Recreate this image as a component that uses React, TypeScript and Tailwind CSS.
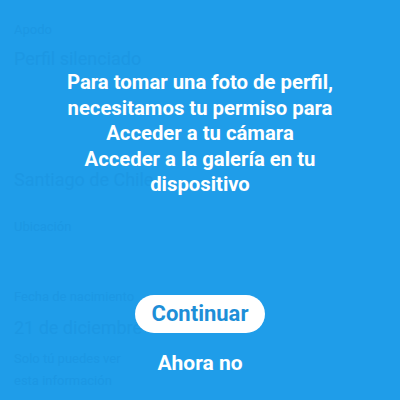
import React from 'react';

const ghost = 'text-[#1c97e3]';

export default function App() {
    return (
        <div
            className="relative w-[400px] h-[400px] overflow-hidden bg-[#1f9de9]"
            style={{ fontFamily: 'Roboto, "Noto Sans", sans-serif' }}
        >
            {/* Faded profile form behind the permission overlay */}
            <div className={`flex flex-col px-[14px] ${ghost}`}>
                <div className="mt-[22px] text-[13px] leading-[16px]">Apodo</div>
                <div className="mt-[10px] text-[18px] leading-[22px]">Perfil silenciado</div>
                <div className="mt-[99px] text-[18px] leading-[22px]">Santiago de Chile</div>
                <div className="mt-[28px] text-[13px] leading-[16px]">Ubicación</div>
                <div className="mt-[54px] text-[13px] leading-[16px]">Fecha de nacimiento</div>
                <div className="mt-[12px] text-[18px] leading-[22px]">21 de diciembre</div>
                <div className="mt-[12px] text-[13px] leading-[16px]">Solo tú puedes ver</div>
                <div className="mt-[6px] text-[13px] leading-[16px]">esta información</div>
            </div>

            {/* Permission overlay */}
            <div className="absolute inset-0 flex flex-col items-center">
                <div className="mt-[70px] text-center text-white font-bold text-[20.3px] leading-[25.5px]">
                    <p>Para tomar una foto de perfil,</p>
                    <p>necesitamos tu permiso para</p>
                    <p>Acceder a tu cámara</p>
                    <p>Acceder a la galería en tu</p>
                    <p>dispositivo</p>
                </div>
                <button className="mt-[97px] h-[38px] px-[17px] rounded-full bg-white text-[#1e8fd8] font-bold text-[22px] leading-none">
                    Continuar
                </button>
                <button className="mt-[18px] text-white font-bold text-[21px] leading-[24px]">
                    Ahora no
                </button>
            </div>
        </div>
    );
}
